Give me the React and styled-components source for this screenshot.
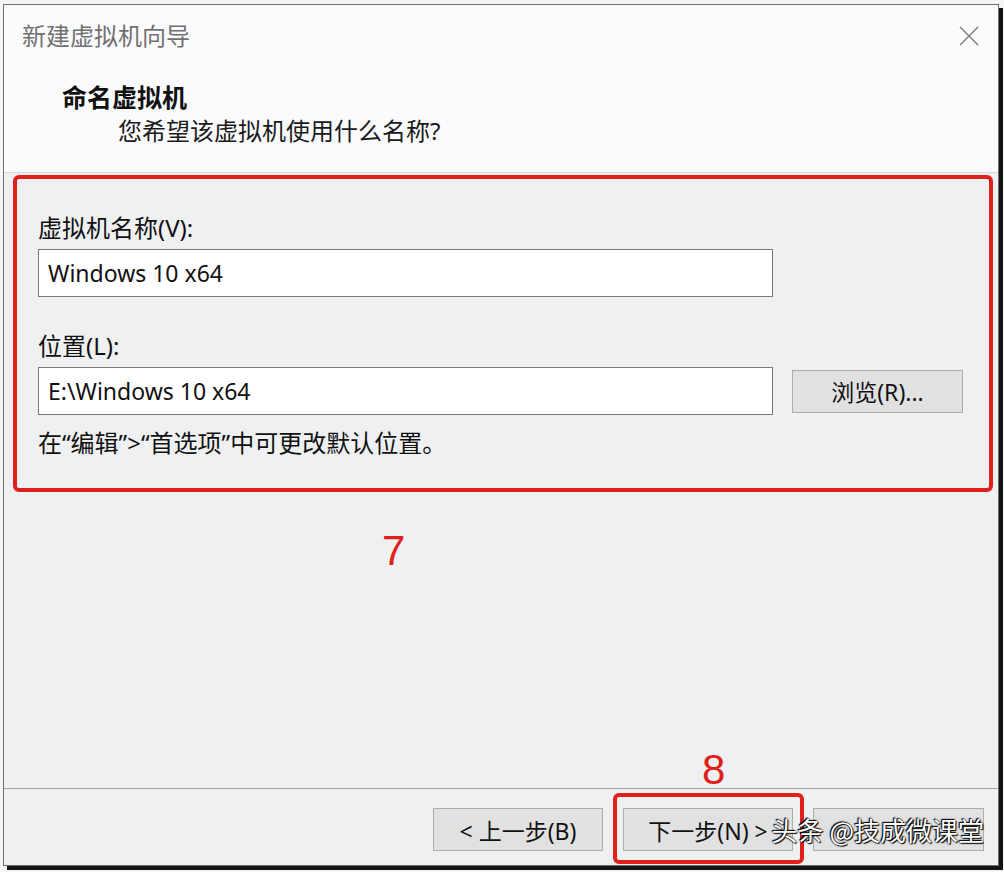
import React from 'react';
import styled, { createGlobalStyle } from 'styled-components';

const GlobalStyle = createGlobalStyle`
    html, body {
        margin: 0;
        padding: 0;
        background: #f4f5f7;
    }
    body {
        font-family: "Noto Sans", "Noto Sans CJK SC", sans-serif;
    }
`;

const red = '#e0201b';

function CloseIcon() {
    return (
        <svg width="20" height="20" viewBox="0 0 20 20">
            <path d="M1 1 L19 19 M19 1 L1 19" stroke="#7a7a7a" strokeWidth="1.4" fill="none" />
        </svg>
    );
}

function App() {
    return (
        <Page>
            <GlobalStyle />
            <Window>
                <Header>
                    <TitleRow>
                        <Title>新建虚拟机向导</Title>
                        <CloseButton>
                            <CloseIcon />
                        </CloseButton>
                    </TitleRow>
                    <Heading>命名虚拟机</Heading>
                    <SubHeading>您希望该虚拟机使用什么名称?</SubHeading>
                </Header>

                <Body>
                    <Highlight>
                        <Label>虚拟机名称(V):</Label>
                        <Field>Windows 10 x64</Field>

                        <Label $gap={34}>位置(L):</Label>
                        <FieldRow>
                            <Field>E:\Windows 10 x64</Field>
                            <Button $width={171}>浏览(R)...</Button>
                        </FieldRow>

                        <Hint>在“编辑”&gt;“首选项”中可更改默认位置。</Hint>
                    </Highlight>

                    <StepMark $left={378} $top={357}>7</StepMark>
                    <StepMark $left={698} $top={576}>8</StepMark>
                </Body>

                <Footer>
                    <Button $width={170}>&lt; 上一步(B)</Button>
                    <Button $width={170} $marked>下一步(N) &gt;</Button>
                    <Button $width={171} $hidden>取消</Button>
                    <Watermark>头条 @技成微课堂</Watermark>
                </Footer>
            </Window>
        </Page>
    );
}

const Page = styled.div`
    width: 1004px;
    height: 872px;
    padding: 4px 0 0 3px;
    box-sizing: border-box;
    overflow: hidden;
    background: #f4f5f7;
`;

const Window = styled.div`
    width: 996px;
    height: 862px;
    box-sizing: border-box;
    display: flex;
    flex-direction: column;
    border: 1px solid #6e6e6e;
    background: #eff0f2;
    box-shadow: 4px 4px 0 #141414;
`;

const Header = styled.div`
    height: 168px;
    box-sizing: border-box;
    padding-top: 16px;
    background: #fbfbfd;
    border-bottom: 1px solid #d6d7da;
`;

const TitleRow = styled.div`
    display: flex;
    align-items: center;
    justify-content: space-between;
    padding: 0 19px 0 18px;
    height: 30px;
`;

const Title = styled.div`
    font-size: 24px;
    line-height: 30px;
    color: #707070;
`;

const CloseButton = styled.div`
    display: flex;
    width: 20px;
    height: 20px;
`;

const Heading = styled.div`
    margin: 31px 0 0 58px;
    font-size: 25px;
    line-height: 30px;
    font-weight: 700;
    color: #111;
`;

const SubHeading = styled.div`
    margin: 4px 0 0 114px;
    font-size: 24px;
    line-height: 30px;
    color: #1a1a1a;
`;

const Body = styled.div`
    flex: 1;
    position: relative;
    padding: 2px 0 0 9px;
`;

const Highlight = styled.div`
    width: 980px;
    box-sizing: border-box;
    padding: 34px 21px 30px 21px;
    border: 4px solid ${red};
    border-radius: 6px;
`;

const Label = styled.div`
    margin-top: ${(p) => p.$gap || 0}px;
    font-size: 24px;
    line-height: 30px;
    color: #111;
`;

const FieldRow = styled.div`
    display: flex;
    align-items: center;
    gap: 19px;
    margin-top: 6px;
`;

const Field = styled.div`
    width: 735px;
    height: 48px;
    box-sizing: border-box;
    margin-top: 6px;
    padding: 0 9px;
    display: flex;
    align-items: center;
    border: 1px solid #7a7a7a;
    background: #fff;
    font-size: 23px;
    color: #111;
    ${FieldRow} & {
        margin-top: 0;
    }
`;

const Hint = styled.div`
    margin-top: 13px;
    font-size: 24px;
    line-height: 30px;
    color: #111;
`;

const Button = styled.div`
    position: relative;
    width: ${(p) => p.$width}px;
    height: 43px;
    box-sizing: border-box;
    display: flex;
    align-items: center;
    justify-content: center;
    border: 1px solid #adadad;
    background: #e1e1e1;
    font-size: 23px;
    color: ${(p) => (p.$hidden ? 'transparent' : '#111')};

    ${(p) =>
        p.$marked &&
        `
        &::after {
            content: '';
            position: absolute;
            inset: -16px -12px -14px -11px;
            border: 4px solid ${red};
            border-radius: 6px;
        }
    `}
`;

const Footer = styled.div`
    position: relative;
    height: 77px;
    box-sizing: border-box;
    display: flex;
    justify-content: flex-end;
    gap: 20px;
    padding: 19px 14px 0 0;
    border-top: 1px solid #a3a3a3;
`;

const StepMark = styled.div`
    position: absolute;
    left: ${(p) => p.$left}px;
    top: ${(p) => p.$top}px;
    font-family: "Liberation Sans", sans-serif;
    font-size: 42px;
    line-height: 42px;
    color: ${red};
`;

const Watermark = styled.div`
    position: absolute;
    right: 14px;
    top: 26px;
    font-family: "Noto Sans CJK SC", sans-serif;
    font-size: 26px;
    line-height: 30px;
    color: #fff;
    text-shadow: 0 0 2px #000, 1px 1px 1px #000, -1px -1px 1px #000;
`;

export default App;
